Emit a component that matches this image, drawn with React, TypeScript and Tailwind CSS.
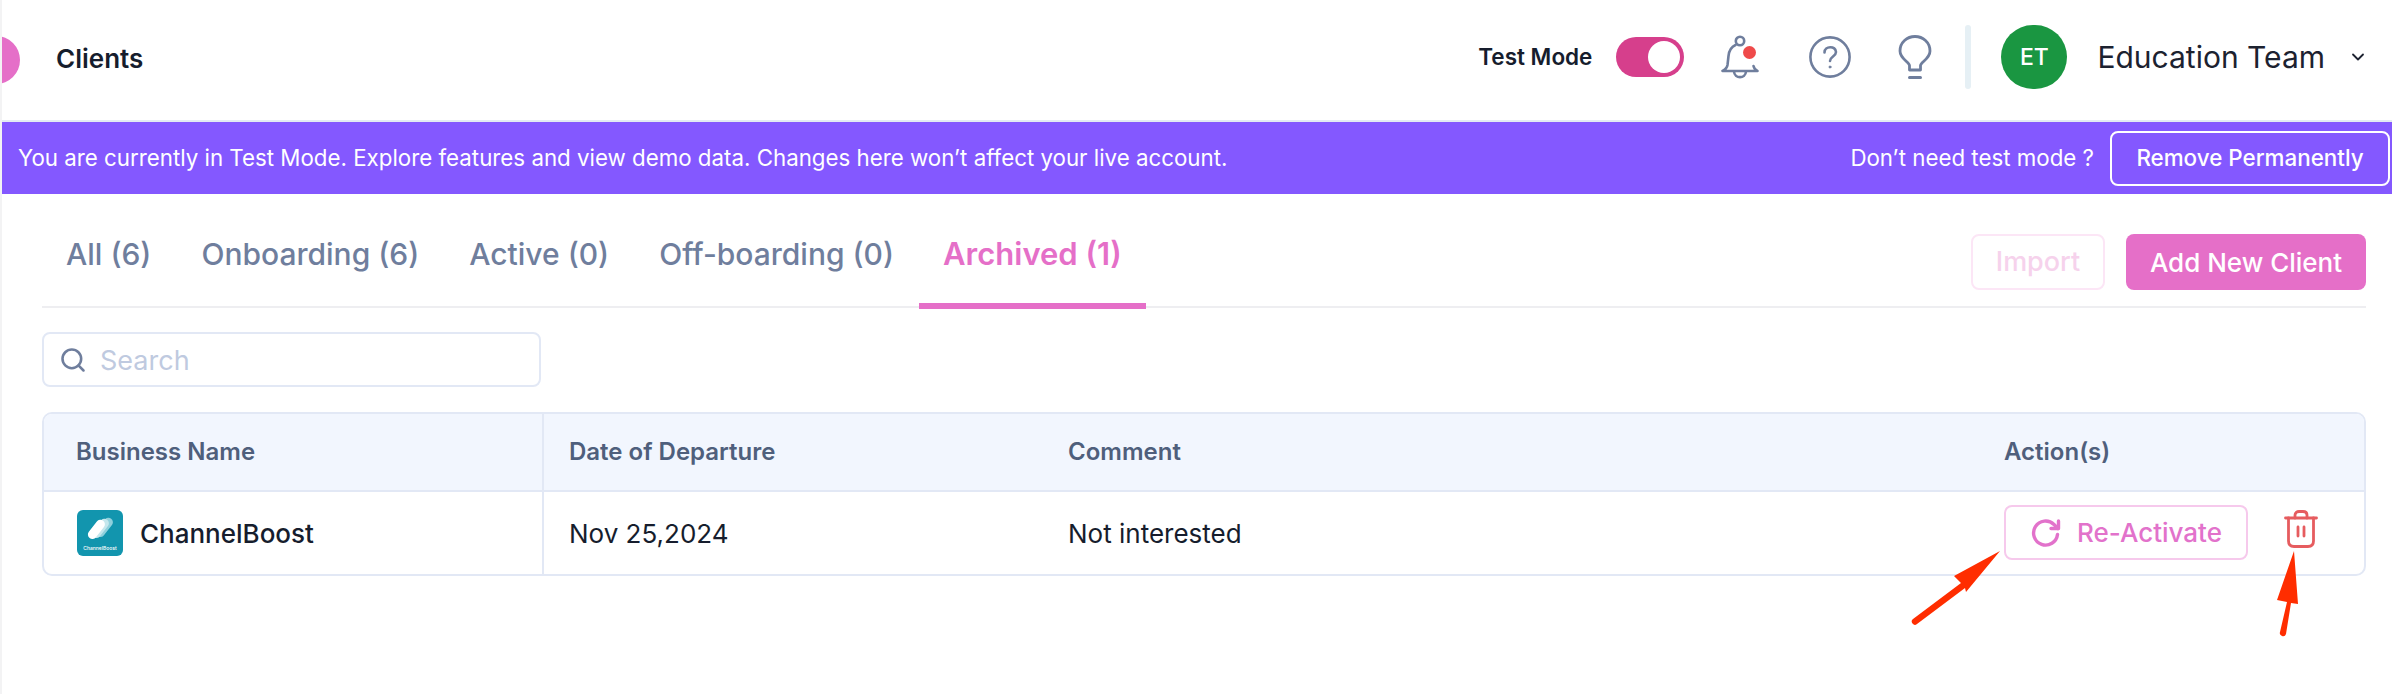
import { ChevronDown, ChevronLeft, Search } from "lucide-react";

const TABS = [
  { label: "All (6)", active: false },
  { label: "Onboarding (6)", active: false },
  { label: "Active (0)", active: false },
  { label: "Off-boarding (0)", active: false },
  { label: "Archived (1)", active: true },
];

function BellIcon() {
  return (
    <svg width="38" height="44" viewBox="0 0 38 44" fill="none" stroke="#6f7e9d" strokeWidth="2.6" strokeLinecap="round" strokeLinejoin="round">
      <circle cx="19" cy="6" r="4.2" />
      <path d="M14.5 10 C10 12 8 16 7.5 21 L6.5 30 C6 33 3.5 35 1.5 36 H36.5 C34 35 33 33 32.5 31" />
      <path d="M13 36.5 C13.5 44 24.5 44 25 36.5" />
    </svg>
  );
}

function HelpIcon() {
  return (
    <svg width="42" height="42" viewBox="0 0 42 42" fill="none" stroke="#6f7e9d" strokeWidth="2.6" strokeLinecap="round" strokeLinejoin="round">
      <circle cx="21" cy="21" r="19.6" />
      <path d="M15.5 16.5 C15.5 9.5 27 9.5 27 16 C27 20.5 21 20.5 21 25" />
      <circle cx="21" cy="31" r="1" fill="#6f7e9d" strokeWidth="1" />
    </svg>
  );
}

function BulbIcon() {
  return (
    <svg width="34" height="44" viewBox="0 0 34 44" fill="none" stroke="#6f7e9d" strokeWidth="2.8" strokeLinecap="round" strokeLinejoin="round">
      <path d="M11.5 35 V30.5 C11.5 27 2 24 2 16 C2 7.5 9 1.5 17 1.5 C25 1.5 32 7.5 32 16 C32 24 22.5 27 22.5 30.5 V35 Z" />
      <path d="M11.5 42.5 H22.5" strokeWidth="3" />
    </svg>
  );
}

function RefreshIcon() {
  return (
    <svg width="30" height="30" viewBox="0 0 30 30" fill="none" stroke="#e272cb" strokeWidth="3.4" strokeLinecap="round" strokeLinejoin="round">
      <path d="M26.5 16.5 A12 12 0 1 1 23 6.5 L27 10.5" />
      <path d="M27.5 3 V10.5 H20" />
    </svg>
  );
}

function TrashIcon() {
  return (
    <svg width="34" height="38" viewBox="0 0 34 38" fill="none" stroke="#e65c5f" strokeWidth="2.8" strokeLinecap="round" strokeLinejoin="round">
      <path d="M1.5 8 H32.5" />
      <path d="M11 8 V5 C11 2.5 13 1.5 15 1.5 H19 C21 1.5 23 2.5 23 5 V8" />
      <path d="M4.5 8 V31 C4.5 34.5 6.5 36.5 10 36.5 H24 C27.5 36.5 29.5 34.5 29.5 31 V8" />
      <path d="M14 17 V26 M20 17 V26" />
    </svg>
  );
}

function Logo() {
  return (
    <div className="flex h-[46px] w-[46px] flex-col items-center overflow-hidden rounded-[6px] bg-[#1295ae]">
      <svg width="30" height="27" viewBox="0 0 30 27" className="mt-[7px]">
        <rect x="15" y="-1" width="9" height="22" rx="4.5" transform="rotate(38 19 10)" fill="#8fd0dc" />
        <rect x="11" y="0" width="9" height="22" rx="4.5" transform="rotate(38 15 11)" fill="#c5e7ed" />
        <rect x="7" y="1" width="9" height="22" rx="4.5" transform="rotate(38 11 12)" fill="#ffffff" />
      </svg>
      <span className="mt-[1px] text-[5px] leading-[6px] font-medium whitespace-nowrap text-white">ChannelBoost</span>
    </div>
  );
}

export default function App() {
  return (
    <div className="relative h-[694px] w-[2392px] overflow-hidden border-l-2 border-[#f3f3f4] bg-white font-['Inter',sans-serif]">
      {/* Top bar */}
      <header className="flex h-[122px] items-center border-b-2 border-[#e3ebf3] pr-[24px]">
        <div className="-ml-[30px] flex h-[48px] w-[48px] items-center justify-end rounded-full bg-[#e56fc8] pr-[26px] text-white">
          <ChevronLeft size={20} strokeWidth={2.5} className="shrink-0" />
        </div>
        <h1 className="-mt-[3px] ml-[36px] text-[26px] font-semibold text-[#161d2d]">Clients</h1>
        <div className="-mt-[6px] ml-auto flex items-center">
          <span className="text-[22.5px] font-semibold text-[#161d2d]">Test Mode</span>
          <div className="ml-[24px] flex h-[40px] w-[68px] items-center justify-end rounded-full bg-[#d63f8c] pr-[4px]">
            <div className="h-[32px] w-[32px] rounded-full bg-white" />
          </div>
          <div className="relative ml-[37px] h-[44px] w-[38px]">
            <BellIcon />
            <div className="absolute top-[11px] left-[22px] h-[13px] w-[13px] rounded-full bg-[#ef4a4a]" />
          </div>
          <div className="ml-[50px]">
            <HelpIcon />
          </div>
          <div className="ml-[47px]">
            <BulbIcon />
          </div>
          <div className="ml-[33px] h-[64px] w-[6px] rounded-full bg-[#e6f0f5]" />
          <div className="ml-[30px] flex h-[64px] w-[66px] items-center justify-center rounded-full bg-[#1a9641] text-[23px] font-medium text-white">ET</div>
          <span className="ml-[30px] text-[30px] text-[#1c2230]">Education Team</span>
          <ChevronDown className="ml-[23px]" size={20} color="#1c2230" strokeWidth={2.2} />
        </div>
      </header>

      {/* Test mode banner */}
      <div className="flex h-[72px] items-center justify-between bg-[#8458ff] pr-[2px] pl-[16px] text-white">
        <span className="text-[22.3px]">You are currently in Test Mode. Explore features and view demo data. Changes here won’t affect your live account.</span>
        <div className="flex items-center">
          <span className="text-[22.3px]">Don’t need test mode ?</span>
          <button className="ml-[16px] h-[55px] w-[280px] rounded-[8px] border-2 border-white text-[22.4px] font-medium">Remove Permanently</button>
        </div>
      </div>

      <main className="pr-[26px] pl-[40px]">
        {/* Tabs */}
        <div className="relative flex h-[114px] items-start justify-between border-b-2 border-[#eeeef1]">
          <div className="flex">
            {TABS.map((tab) => (
              <div
                key={tab.label}
                className={
                  tab.active
                    ? "relative -mb-[2px] flex h-[115px] items-start border-b-[6px] border-[#e56fc8] px-[24px] pt-[40px] text-[31px] leading-[40px] font-semibold text-[#e56fc8]"
                    : "flex h-[114px] items-start px-[25px] pt-[40px] text-[30px] leading-[40px] font-medium text-[#6f7e9d] first:pl-[24px]"
                }
              >
                {tab.label}
              </div>
            ))}
          </div>
          <div className="mt-[40px] flex gap-[21px]">
            <button className="h-[56px] w-[134px] rounded-[8px] border-2 border-[#fce6f6] text-[27px] font-medium text-[#f6d2ec]">Import</button>
            <button className="h-[56px] w-[240px] rounded-[8px] bg-[#e56fc8] text-[26px] font-medium text-white">Add New Client</button>
          </div>
        </div>

        {/* Search */}
        <div className="mt-[24px] flex h-[55px] w-[499px] items-center rounded-[8px] border-2 border-[#e2e8f5] pl-[15px]">
          <Search size={28} color="#6f7e9d" strokeWidth={2.2} />
          <span className="mt-[3px] ml-[13px] text-[27px] text-[#bfcae0]">Search</span>
        </div>

        {/* Table */}
        <div className="mt-[25px] h-[164px] w-[2324px] overflow-hidden rounded-[10px] border-2 border-[#e2e8f5]">
          <div className="flex h-[78px] items-center border-b-2 border-[#e2e8f5] bg-[#f2f6fe] text-[24px] font-semibold text-[#4f5f7c]">
            <div className="flex h-full w-[500px] items-center border-r-2 border-[#e2e8f5] pl-[32px]">Business Name</div>
            <div className="w-[499px] pl-[25px]">Date of Departure</div>
            <div className="w-[961px] pl-[25px]">Comment</div>
            <div>Action(s)</div>
          </div>
          <div className="flex h-[82px] items-center text-[26px] text-[#161d2d]">
            <div className="flex h-full w-[500px] items-center gap-[17px] border-r-2 border-[#e2e8f5] pl-[33px]">
              <Logo />
              <span className="font-medium">ChannelBoost</span>
            </div>
            <div className="w-[499px] pl-[25px]">Nov 25,2024</div>
            <div className="w-[961px] pl-[25px]">Not interested</div>
            <button className="-mt-[1px] flex h-[55px] w-[244px] items-center gap-[16px] rounded-[8px] border-2 border-[#f6c9ec] pl-[25px] text-[26px] font-medium text-[#e272cb]">
              <RefreshIcon />
              Re-Activate
            </button>
            <div className="mt-[-8px] ml-[36px]">
              <TrashIcon />
            </div>
          </div>
        </div>
      </main>

      {/* Annotation arrows */}
      <svg className="absolute top-[540px] left-[1905px]" width="110" height="95" viewBox="1905 540 110 95" fill="#ff2d00">
        <path d="M1998 551 L1952 576 L1959 583 L1911 619 A3 3 0 0 0 1915 624 L1963 588 L1964 592 Z" />
      </svg>
      <svg className="absolute top-[540px] left-[2265px]" width="40" height="100" viewBox="2265 540 40 100" fill="#ff2d00">
        <path d="M2292 551 L2275 600 L2285 602 L2278 632 A3 3 0 0 0 2284 634 L2289 603 L2296 604 Z" />
      </svg>
    </div>
  );
}
